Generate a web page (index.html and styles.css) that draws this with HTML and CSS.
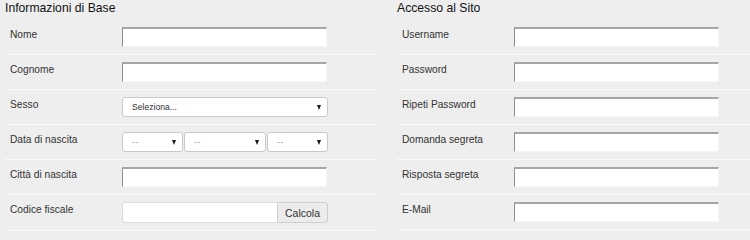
FILE: index.html
```html
<!DOCTYPE html>
<html lang="it">
<head>
<meta charset="utf-8">
<title>Registrazione</title>
<link rel="stylesheet" href="styles.css">
</head>
<body>
<div class="page">
  <section class="col">
    <h2 class="title">Informazioni di Base</h2>
    <div class="row"><label class="label">Nome</label><input class="text" type="text"></div>
    <div class="row"><label class="label">Cognome</label><input class="text" type="text"></div>
    <div class="row"><label class="label">Sesso</label>
      <div class="select wide"><span>Seleziona...</span><i class="caret"></i></div>
    </div>
    <div class="row"><label class="label">Data di nascita</label>
      <div class="dates">
        <div class="select day"><span class="dash">--</span><i class="caret"></i></div>
        <div class="select month"><span class="dash">--</span><i class="caret"></i></div>
        <div class="select year"><span class="dash">--</span><i class="caret"></i></div>
      </div>
    </div>
    <div class="row"><label class="label">Città di nascita</label><input class="text" type="text"></div>
    <div class="row"><label class="label">Codice fiscale</label>
      <div class="group"><input class="group-input" type="text"><button class="btn" type="button">Calcola</button></div>
    </div>
  </section>
  <section class="col">
    <h2 class="title">Accesso al Sito</h2>
    <div class="row"><label class="label">Username</label><input class="text" type="text"></div>
    <div class="row"><label class="label">Password</label><input class="text" type="password"></div>
    <div class="row"><label class="label">Ripeti Password</label><input class="text" type="password"></div>
    <div class="row"><label class="label">Domanda segreta</label><input class="text" type="text"></div>
    <div class="row"><label class="label">Risposta segreta</label><input class="text" type="text"></div>
    <div class="row"><label class="label">E-Mail</label><input class="text" type="text"></div>
  </section>
</div>
</body>
</html>
```
FILE: styles.css
```css
html, body {
  margin: 0;
  padding: 0;
  background: #eeeeee;
  overflow: hidden;
}
body {
  font-family: "Liberation Sans", Arial, sans-serif;
  color: #333;
}
.page {
  display: grid;
  grid-template-columns: 371px 371px;
  column-gap: 21px;
  padding-left: 5px;
  width: max-content;
}
.title {
  margin: 0 0 4px;
  font-size: 12.2px;
  line-height: 16px;
  font-weight: normal;
  color: #111;
}
.row {
  display: flex;
  align-items: flex-start;
  padding: 7px 0;
  border-bottom: 1px solid #f9f9f9;
}
.label {
  box-sizing: border-box;
  width: 117px;
  padding: 2px 0 0 5px;
  font-size: 10.2px;
  line-height: 12px;
  color: #333;
}
.text {
  box-sizing: border-box;
  width: 205px;
  height: 20px;
  margin: 0;
  padding: 0;
  background: #fff;
  border-style: solid;
  border-width: 2px 1px 1px 1px;
  border-color: #a6a6a6 #f6f6f6 #f6f6f6 #8e8e8e;
  outline: none;
}
.select {
  box-sizing: border-box;
  height: 20px;
  background: #fff;
  border: 1px solid #c9c9c9;
  border-radius: 3px;
  display: flex;
  align-items: center;
  justify-content: space-between;
  padding: 0 6px 0 9px;
  font-size: 8.6px;
  color: #333;
}
.wide { width: 206px; }
.dates {
  display: flex;
  gap: 1px;
  width: 206px;
}
.day { width: 61px; }
.month { width: 82px; }
.year { width: 61px; }
.dash {
  color: #999;
  font-size: 9px;
  letter-spacing: 0.5px;
}
.caret {
  width: 0;
  height: 0;
  border-left: 2.5px solid transparent;
  border-right: 2.5px solid transparent;
  border-top: 5px solid #1a1a1a;
}
.group {
  display: flex;
  width: 206px;
  height: 21px;
}
.group-input {
  box-sizing: border-box;
  width: 155px;
  height: 21px;
  margin: 0;
  padding: 0;
  background: #fff;
  border: 1px solid #dcdcdc;
  border-right: none;
  border-radius: 3px 0 0 3px;
  outline: none;
}
.btn {
  box-sizing: border-box;
  width: 51px;
  height: 21px;
  margin: 0;
  padding: 0;
  background: #ececec;
  border: 1px solid #cfcfcf;
  border-radius: 0 3px 3px 0;
  font-family: "Liberation Sans", Arial, sans-serif;
  font-size: 10.5px;
  color: #333;
}
```
